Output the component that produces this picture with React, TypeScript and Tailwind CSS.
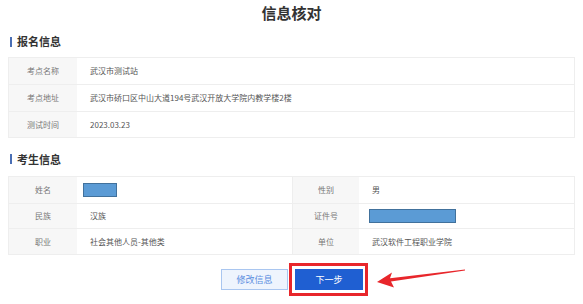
const font = { fontFamily: '"Noto Sans CJK SC", "Noto Sans", sans-serif' };

const SectionTitle = ({ text, className }: { text: string; className: string }) => (
  <div className={`flex items-center gap-[5px] pl-[2px] ${className}`}>
    <span className="w-[2px] h-[10px] bg-[#4a6fb5]" />
    <span className="text-[11px] font-bold text-[#333]">{text}</span>
  </div>
);

const Label = ({ children, h }: { children: React.ReactNode; h: string }) => (
  <div className={`${h} flex items-center justify-center bg-[#f7f7f7] text-[8px] text-[#777]`}>
    {children}
  </div>
);

const Value = ({
  children,
  h,
  pad = "pl-[13px]",
  line = false,
}: {
  children: React.ReactNode;
  h: string;
  pad?: string;
  line?: boolean;
}) => (
  <div
    className={`${h} ${pad} ${line ? "border-r border-[#eee]" : ""} flex items-center text-[8px] text-[#555]`}
  >
    {children}
  </div>
);

const Masked = ({ w }: { w: string }) => (
  <span className={`${w} h-[14px] bg-[#5b9bd5] border border-[#41719c]`} />
);

export default function App() {
  const regRows = [
    ["考点名称", "武汉市测试站", "h-[26px]"],
    ["考点地址", "武汉市硚口区中山大道194号武汉开放大学院内教学楼2楼", "h-[26px]"],
    ["测试时间", "2023.03.23", "h-[25px]"],
  ];

  return (
    <div style={font} className="relative w-[583px] h-[304px] bg-white px-2 overflow-hidden">
      <div className="h-[26px] flex items-center justify-center text-[15px] font-bold text-[#333]">
        信息核对
      </div>

      <SectionTitle text="报名信息" className="h-[31px]" />

      <div className="border border-[#eee] divide-y divide-[#eee]">
        {regRows.map(([k, v, h]) => (
          <div key={k} className="grid grid-cols-[68px_1fr]">
            <Label h={h}>{k}</Label>
            <Value h={h}>{v}</Value>
          </div>
        ))}
      </div>

      <SectionTitle text="考生信息" className="mt-[12px] h-[18px] mb-[8px]" />

      <div className="border border-[#eee] divide-y divide-[#eee]">
        <div className="grid grid-cols-[68px_216px_66px_1fr]">
          <Label h="h-[26px]">姓名</Label>
          <Value h="h-[26px]" pad="pl-[6px]" line>
            <Masked w="w-[34px]" />
          </Value>
          <Label h="h-[26px]">性别</Label>
          <Value h="h-[26px]">男</Value>
        </div>
        <div className="grid grid-cols-[68px_216px_66px_1fr]">
          <Label h="h-[24px]">民族</Label>
          <Value h="h-[24px]" line>
            汉族
          </Value>
          <Label h="h-[24px]">证件号</Label>
          <Value h="h-[24px]" pad="pl-[10px]">
            <Masked w="w-[87px]" />
          </Value>
        </div>
        <div className="grid grid-cols-[68px_216px_66px_1fr]">
          <Label h="h-[25px]">职业</Label>
          <Value h="h-[25px]" line>
            社会其他人员-其他类
          </Value>
          <Label h="h-[25px]">单位</Label>
          <Value h="h-[25px]">武汉软件工程职业学院</Value>
        </div>
      </div>

      <div className="mt-[8px] flex items-center justify-center pl-[6px]">
        <button className="w-[67px] h-[21px] bg-[#eef4fd] border border-[#a9c6f0] text-[9px] text-[#5a8de0]">
          修改信息
        </button>
        <div className="ml-px flex border-[3px] border-[#e8262b] p-[3px] pr-[2px]">
          <button className="w-[68px] h-[21px] bg-[#1f5fd2] text-[9px] text-white">下一步</button>
        </div>
      </div>

      <svg
        className="absolute left-[370px] top-[262px] pointer-events-none"
        width="100"
        height="35"
        viewBox="0 0 100 35"
      >
        <polygon
          points="7,20 22,10.5 20,16.2 95,7.4 95,8.6 21,19.4 24,25.5"
          fill="#e8262b"
        />
      </svg>
    </div>
  );
}
